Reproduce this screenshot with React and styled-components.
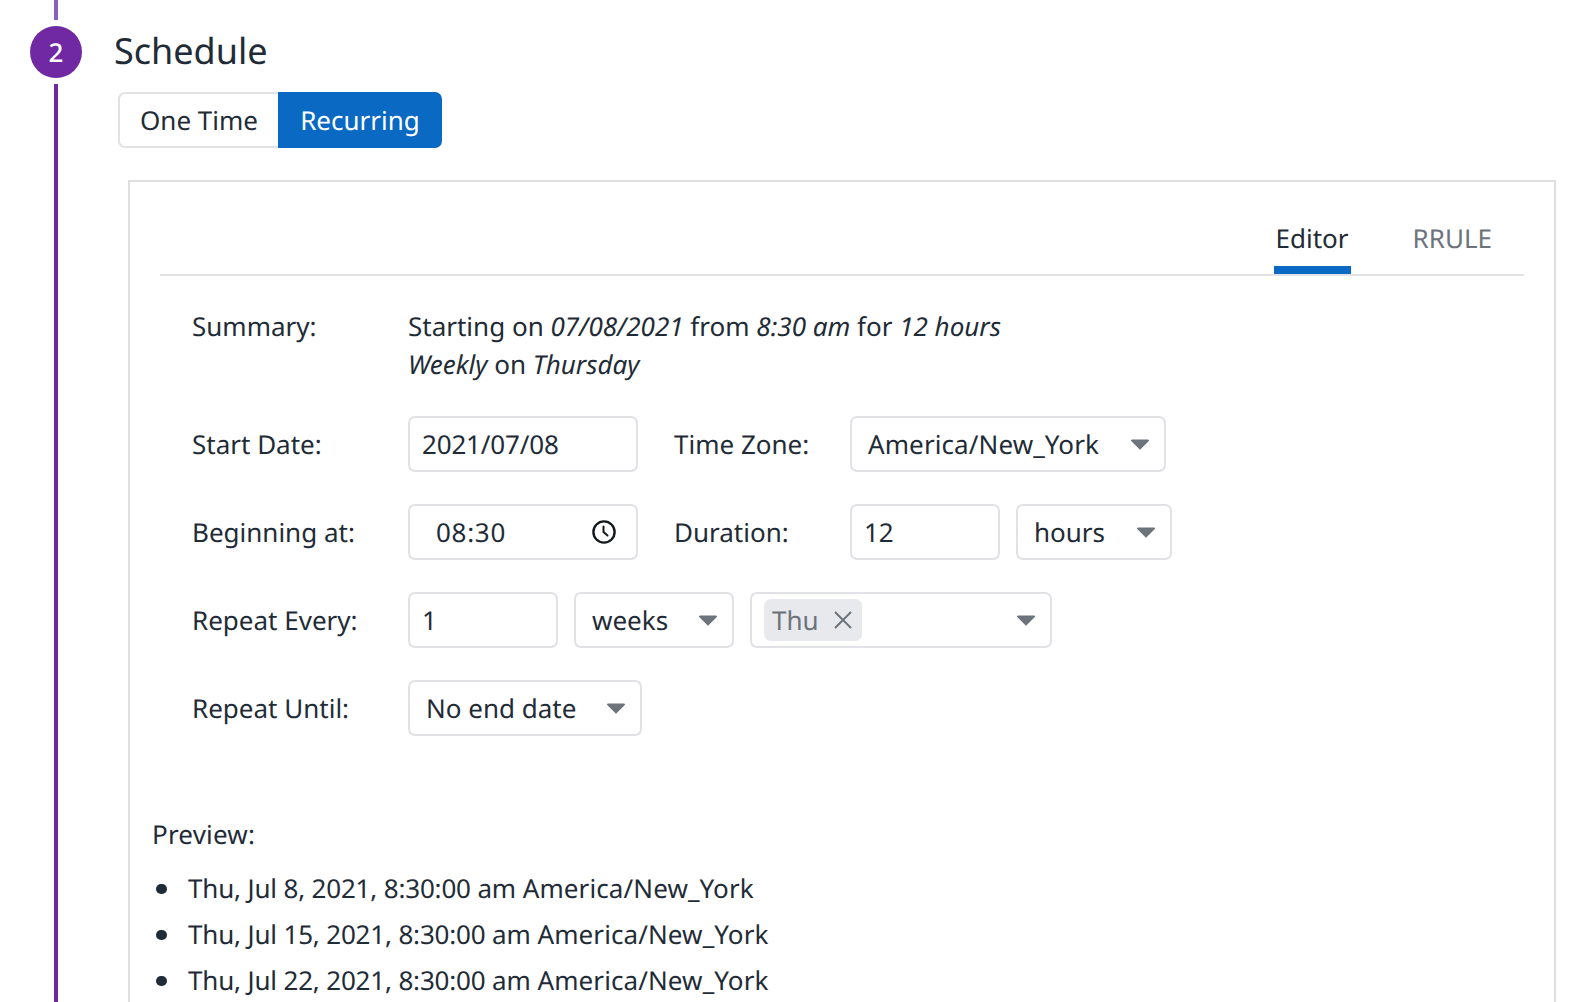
import React from "react";
import styled, { createGlobalStyle } from "styled-components";

const Global = createGlobalStyle`
  html, body { margin: 0; padding: 0; background: #fff; }
  body { font-family: "Noto Sans", "Open Sans", sans-serif; color: #1f2c37; font-size: 26px; text-rendering: geometricPrecision; }
  * { box-sizing: border-box; }
`;

const Page = styled.div`
  display: flex;
  height: 1002px;
  overflow: hidden;
  padding-left: 30px;
`;
const Rail = styled.div`
  display: flex;
  flex-direction: column;
  align-items: center;
  width: 52px;
  flex: none;
`;
const RailTop = styled.div`
  width: 4px;
  height: 20px;
  background: #8a62bd;
  margin-bottom: 6px;
`;
const RailLine = styled.div`
  width: 4px;
  flex: 1;
  background: #7029a3;
  margin-top: 6px;
`;
const StepCircle = styled.div`
  width: 52px;
  height: 52px;
  flex: none;
  border-radius: 50%;
  background: #7029a3;
  color: #fff;
  display: flex;
  align-items: center;
  justify-content: center;
  font-size: 26px;
  font-weight: 500;
`;
const Main = styled.div`
  flex: 1;
  padding-left: 32px;
  padding-right: 36px;
  display: flex;
  flex-direction: column;
`;
const Title = styled.h2`
  margin: 27px 0 0;
  flex: none;
  font-size: 36px;
  font-weight: 400;
  line-height: 48px;
  height: 65px;
`;
const Toggle = styled.div`
  display: flex;
  flex: none;
  margin-left: 4px;
  height: 56px;
`;
const ToggleBtn = styled.div`
  display: flex;
  align-items: center;
  justify-content: center;
  width: ${p => p.$w}px;
  border: 2px solid ${p => (p.$active ? "#0969c3" : "#e1e2e6")};
  border-right-width: ${p => (p.$active ? 2 : 0)}px;
  background: ${p => (p.$active ? "#0969c3" : "#fff")};
  color: ${p => (p.$active ? "#fff" : "#1f2c37")};
  border-radius: ${p => (p.$active ? "0 7px 7px 0" : "7px 0 0 7px")};
`;
const Panel = styled.div`
  margin: 32px 0 0 14px;
  flex: 1;
  border: 2px solid #dfdfe2;
  padding: 0 30px;
`;
const Tabs = styled.div`
  display: flex;
  justify-content: flex-end;
  height: 94px;
  padding-right: 30px;
  gap: 60px;
  border-bottom: 2px solid #e1e2e6;
`;
const Tab = styled.div`
  height: 92px;
  padding: 36px 2px 0;
  line-height: 40px;
  border-bottom: ${p => (p.$active ? "8px solid #0969c3" : "none")};
  color: ${p => (p.$active ? "#1f2c37" : "#6c737b")};
`;
const Form = styled.div`
  padding: 31px 0 0 32px;
  display: flex;
  flex-direction: column;
`;
const SummaryRow = styled.div`
  display: flex;
  line-height: 38px;
  margin-bottom: 33px;
`;
const Row = styled.div`
  display: flex;
  align-items: center;
  gap: 16px;
  height: 56px;
  margin-bottom: 32px;
`;
const Label = styled.div`
  width: 216px;
  flex: none;
`;
const RowLabel = styled(Label)`
  margin-right: -16px;
`;
const InlineLabel = styled.div`
  width: 196px;
  flex: none;
  padding-left: 20px;
  margin-right: -16px;
`;
const Field = styled.div`
  display: flex;
  align-items: center;
  justify-content: space-between;
  width: ${p => p.$w}px;
  height: 56px;
  flex: none;
  padding: 0 ${p => p.$pr ?? 12}px 0 ${p => p.$pl ?? 12}px;
  border: 2px solid #e1e2e6;
  border-radius: 7px;
  background: #fff;
`;
const TimeText = styled.span`
  letter-spacing: 0.7px;
`;
const Digits = styled.span`
  letter-spacing: -0.17px;
`;
const Zone = styled.span`
  letter-spacing: 0.1px;
`;
const Chip = styled.div`
  display: flex;
  align-items: center;
  gap: 14px;
  height: 42px;
  padding: 0 9px 0 8px;
  border-radius: 7px;
  background: #e8e9ec;
  color: #6c737b;
`;
const Preview = styled.div`
  margin: 47px 0 0 -40px;
  line-height: 38px;
`;
const PreviewTitle = styled.div`
  margin-bottom: 12px;
  letter-spacing: 0.2px;
`;
const Dates = styled.ul`
  margin: 0;
  padding: 0;
  list-style: none;
`;
const DateItem = styled.li`
  line-height: 46px;
  white-space: nowrap;
  &::before {
    content: "";
    display: inline-block;
    width: 10.5px;
    height: 10.5px;
    margin: 0 21.5px 0 4px;
    vertical-align: 4px;
    border-radius: 50%;
    background: #1f2c37;
  }
`;

const Caret = () => (
  <svg width="20" height="12" viewBox="0 0 20 12">
    <path d="M2 1.5h16a1 1 0 0 1 .8 1.6l-8 8a1 1 0 0 1-1.6 0l-8-8A1 1 0 0 1 2 1.5z" fill="#6c737b" />
  </svg>
);
const Clock = () => (
  <svg width="26" height="26" viewBox="0 0 26 26" fill="none" stroke="#14191e" strokeWidth="2.4" strokeLinecap="round">
    <circle cx="13" cy="13" r="10.6" />
    <path d="M12.5 7.5v5.5l4 3.5" strokeWidth="2" />
  </svg>
);
const Cross = () => (
  <svg width="20" height="20" viewBox="0 0 20 20" stroke="#6c737b" strokeWidth="2">
    <path d="M2 2l16 16M18 2L2 18" />
  </svg>
);

const previewDates = ["Thu, Jul 8, 2021, 8:30:00 am", "Thu, Jul 15, 2021, 8:30:00 am", "Thu, Jul 22, 2021, 8:30:00 am"];

export default function App() {
  return (
    <>
      <Global />
      <Page>
        <Rail>
          <RailTop />
          <StepCircle>2</StepCircle>
          <RailLine />
        </Rail>
        <Main>
          <Title>Schedule</Title>
          <Toggle>
            <ToggleBtn $w={160}>One Time</ToggleBtn>
            <ToggleBtn $w={164} $active>Recurring</ToggleBtn>
          </Toggle>
          <Panel>
            <Tabs>
              <Tab $active>Editor</Tab>
              <Tab>RRULE</Tab>
            </Tabs>
            <Form>
              <SummaryRow>
                <Label>Summary:</Label>
                <div>
                  Starting on <em>07/08/2021</em> from <em>8:30 am</em> for <em>12 hours</em>
                  <br />
                  <em>Weekly</em> on <em>Thursday</em>
                </div>
              </SummaryRow>
              <Row>
                <RowLabel>Start Date:</RowLabel>
                <Field $w={230}><Digits>2021/07/08</Digits></Field>
                <InlineLabel>Time Zone:</InlineLabel>
                <Field $w={316} $pl={16} $pr={14}><Zone>America/New_York</Zone><Caret /></Field>
              </Row>
              <Row>
                <RowLabel>Beginning at:</RowLabel>
                <Field $w={230} $pl={26} $pr={19}><TimeText>08:30</TimeText><Clock /></Field>
                <InlineLabel>Duration:</InlineLabel>
                <Field $w={150} $pl={12}>12</Field>
                <Field $w={156} $pl={16} $pr={14}>hours<Caret /></Field>
              </Row>
              <Row>
                <RowLabel>Repeat Every:</RowLabel>
                <Field $w={150}>1</Field>
                <Field $w={160} $pl={16} $pr={14}>weeks<Caret /></Field>
                <Field $w={302} $pr={14}>
                  <Chip>Thu<Cross /></Chip>
                  <Caret />
                </Field>
              </Row>
              <Row>
                <RowLabel>Repeat Until:</RowLabel>
                <Field $w={234} $pl={16} $pr={14}>No end date<Caret /></Field>
              </Row>
              <Preview>
                <PreviewTitle>Preview:</PreviewTitle>
                <Dates>
                  {previewDates.map(d => (
                    <DateItem key={d}><Digits>{d}</Digits> <Zone>America/New_York</Zone></DateItem>
                  ))}
                </Dates>
              </Preview>
            </Form>
          </Panel>
        </Main>
      </Page>
    </>
  );
}
